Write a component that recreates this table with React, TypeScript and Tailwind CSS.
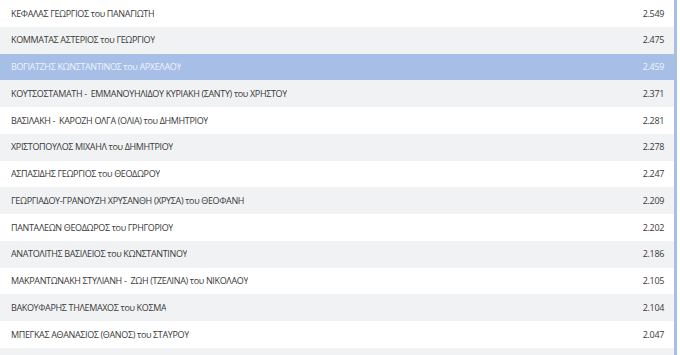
import React from 'react';

interface RowProps {
  name: string;
  votes: string;
  index: number;
  selected?: boolean;
}

const Row: React.FC<RowProps> = ({ name, votes, index, selected }) => {
  const bg = selected ? 'bg-[#a7bfe7] text-[#eef3fb]' : index % 2 === 1 ? 'bg-[#f1f2f3] text-[#3a3a3a]' : 'bg-white text-[#3a3a3a]';
  return (
    <div className={`flex shrink-0 items-center justify-between h-[26.75px] pl-[11px] pr-[10px] ${bg}`}>
      <span className="whitespace-pre overflow-hidden">{name}</span>
      <span>{votes}</span>
    </div>
  );
};

const candidates = [
  { name: 'ΚΕΦΑΛΑΣ ΓΕΩΡΓΙΟΣ του ΠΑΝΑΓΙΩΤΗ', votes: '2.549' },
  { name: 'ΚΟΜΜΑΤΑΣ ΑΣΤΕΡΙΟΣ του ΓΕΩΡΓΙΟΥ', votes: '2.475' },
  { name: 'ΒΟΓΙΑΤΖΗΣ ΚΩΝΣΤΑΝΤΙΝΟΣ του ΑΡΧΕΛΑΟΥ', votes: '2.459' },
  { name: 'ΚΟΥΤΣΟΣΤΑΜΑΤΗ -  ΕΜΜΑΝΟΥΗΛΙΔΟΥ ΚΥΡΙΑΚΗ (ΣΑΝΤΥ) του ΧΡΗΣΤΟΥ', votes: '2.371' },
  { name: 'ΒΑΣΙΛΑΚΗ -  ΚΑΡΟΖΗ ΟΛΓΑ (ΟΛΙΑ) του ΔΗΜΗΤΡΙΟΥ', votes: '2.281' },
  { name: 'ΧΡΙΣΤΟΠΟΥΛΟΣ ΜΙΧΑΗΛ του ΔΗΜΗΤΡΙΟΥ', votes: '2.278' },
  { name: 'ΑΣΠΑΣΙΔΗΣ ΓΕΩΡΓΙΟΣ του ΘΕΟΔΩΡΟΥ', votes: '2.247' },
  { name: 'ΓΕΩΡΓΙΑΔΟΥ-ΓΡΑΝΟΥΖΗ ΧΡΥΣΑΝΘΗ (ΧΡΥΣΑ) του ΘΕΟΦΑΝΗ', votes: '2.209' },
  { name: 'ΠΑΝΤΑΛΕΩΝ ΘΕΟΔΩΡΟΣ του ΓΡΗΓΟΡΙΟΥ', votes: '2.202' },
  { name: 'ΑΝΑΤΟΛΙΤΗΣ ΒΑΣΙΛΕΙΟΣ του ΚΩΝΣΤΑΝΤΙΝΟΥ', votes: '2.186' },
  { name: 'ΜΑΚΡΑΝΤΩΝΑΚΗ ΣΤΥΛΙΑΝΗ -  ΖΩΗ (ΤΖΕΛΙΝΑ) του ΝΙΚΟΛΑΟΥ', votes: '2.105' },
  { name: 'ΒΑΚΟΥΦΑΡΗΣ ΤΗΛΕΜΑΧΟΣ του ΚΟΣΜΑ', votes: '2.104' },
  { name: 'ΜΠΕΓΚΑΣ ΑΘΑΝΑΣΙΟΣ (ΘΑΝΟΣ) του ΣΤΑΥΡΟΥ', votes: '2.047' },
  { name: '', votes: '' },
];

const App: React.FC = () => {
  return (
    <div className="w-[680px] h-[355px] overflow-hidden bg-white flex font-['Open_Sans',sans-serif] text-[9px] tracking-[-0.35px]">
      <div className="w-[674px] flex flex-col">
        {candidates.map((c, i) => (
          <Row key={i} index={i} name={c.name} votes={c.votes} selected={i === 2} />
        ))}
      </div>
      <div className="w-[3px] bg-[#a7bfe7]" />
    </div>
  );
};

export default App;
